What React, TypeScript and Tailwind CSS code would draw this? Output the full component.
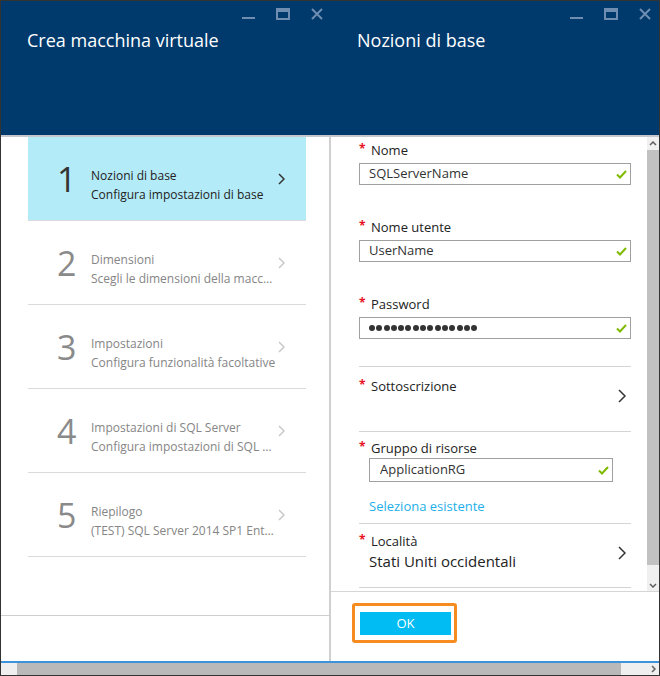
import React from "react";

const steps = [
  { n: "1", title: "Nozioni di base", sub: "Configura impostazioni di base", active: true },
  { n: "2", title: "Dimensioni", sub: "Scegli le dimensioni della macchina virtuale", active: false },
  { n: "3", title: "Impostazioni", sub: "Configura funzionalità facoltative", active: false },
  { n: "4", title: "Impostazioni di SQL Server", sub: "Configura impostazioni di SQL Server", active: false },
  { n: "5", title: "Riepilogo", sub: "(TEST) SQL Server 2014 SP1 Enterprise", active: false },
];

function WindowControls() {
  return (
    <div className="flex items-start gap-[21px] h-[12px]">
      <svg width="13" height="12" viewBox="0 0 13 12">
        <rect x="0" y="9" width="13" height="2" fill="#6f8db0" />
      </svg>
      <svg width="14" height="12" viewBox="0 0 14 12">
        <rect x="1" y="1" width="12" height="10" fill="none" stroke="#6f8db0" strokeWidth="2" />
        <rect x="0" y="0" width="14" height="4" fill="#6f8db0" />
      </svg>
      <svg width="12" height="12" viewBox="0 0 12 12">
        <path d="M1 1 L11 11 M11 1 L1 11" stroke="#6f8db0" strokeWidth="2" />
      </svg>
    </div>
  );
}

function Chevron({ color, w = 7, h = 12 }: { color: string; w?: number; h?: number }) {
  return (
    <svg width={w} height={h} viewBox={`0 0 ${w} ${h}`} className="shrink-0">
      <polyline points={`1,1 ${w - 1},${h / 2} 1,${h - 1}`} fill="none" stroke={color} strokeWidth="1.5" />
    </svg>
  );
}

function Check() {
  return (
    <svg width="11" height="9" viewBox="0 0 11 9" className="shrink-0">
      <polyline points="1,4.5 4,7.5 10,1" fill="none" stroke="#7fba00" strokeWidth="2" />
    </svg>
  );
}

function Label({ text }: { text: string }) {
  return (
    <div className="flex h-4 leading-4 text-[13px] text-[#222]">
      <span className="w-[12px] text-[#e81123] text-[12px] font-bold leading-[14px]">*</span>
      <span>{text}</span>
    </div>
  );
}

function Header({ title }: { title: string }) {
  return (
    <div className="h-[134px] bg-[#003a6c] border-b-2 border-[#c4c8cc] box-content flex flex-col">
      <div className="flex justify-end mt-[7px] pr-[8px]">
        <WindowControls />
      </div>
      <div className="mt-[8px] pl-[26px] text-[18px] leading-6 text-white">{title}</div>
    </div>
  );
}

function LeftBlade() {
  return (
    <div className="w-[330px] flex flex-col">
      <Header title="Crea macchina virtuale" />
      <div className="flex-1 flex flex-col border-r-2 border-[#d0d0d0]">
        <div className="pl-[27px] pr-[23px]">
          {steps.map((s) => (
            <div
              key={s.n}
              className={`h-[84px] flex items-center pl-[29px] border-b border-[#dadada] ${s.active ? "bg-[#b4ebf8]" : ""}`}
            >
              <div className={`w-[34px] text-[34px] leading-none ${s.active ? "text-[#333]" : "text-[#8a8a8a]"}`}>
                {s.n}
              </div>
              <div className={`mt-[12px] w-[187px] text-[12px] leading-[19px] ${s.active ? "text-[#222]" : "text-[#858585]"}`}>
                <div className="truncate">{s.title}</div>
                <div className="truncate">{s.sub}</div>
              </div>
              <Chevron color={s.active ? "#333" : "#c8c8c8"} />
            </div>
          ))}
        </div>
        <div className="flex-1" />
        <div className="h-[46px] border-t border-[#cfcfcf]" />
      </div>
    </div>
  );
}

function Input({ value, className }: { value: React.ReactNode; className: string }) {
  return (
    <div className={`flex items-center justify-between border border-[#a0a0a0] pl-[9px] pr-[3px] text-[13px] text-[#333] ${className}`}>
      <span>{value}</span>
      <Check />
    </div>
  );
}

function Dots() {
  return (
    <span className="flex gap-[1.3px]">
      {Array.from({ length: 15 }).map((_, i) => (
        <span key={i} className="w-[6px] h-[6px] rounded-full bg-[#333]" />
      ))}
    </span>
  );
}

function RightBlade() {
  return (
    <div className="flex-1 flex flex-col">
      <Header title="Nozioni di base" />
      <div className="flex-1 flex flex-col">
        <div className="flex-1 flex">
          <div className="flex-1 pl-[28px] pr-[16px] pt-[5px]">
            <Label text="Nome" />
            <Input value="SQLServerName" className="mt-[5px] h-[22px]" />
            <div className="mt-[34px]">
              <Label text="Nome utente" />
              <Input value="UserName" className="mt-[5px] h-[22px]" />
            </div>
            <div className="mt-[34px]">
              <Label text="Password" />
              <Input value={<Dots />} className="mt-[5px] h-[22px]" />
            </div>
            <div className="mt-[27px] h-px bg-[#d4d4d4]" />
            <div className="h-[64px] flex justify-between pr-[5px]">
              <div className="pt-[11px]">
                <Label text="Sottoscrizione" />
              </div>
              <div className="mt-[22px]">
                <Chevron color="#333" w={8} h={14} />
              </div>
            </div>
            <div className="h-px bg-[#d4d4d4]" />
            <div className="pt-[8px] pb-[9px]">
              <Label text="Gruppo di risorse" />
              <Input value="ApplicationRG" className="mt-[2px] h-[24px] ml-[10px] w-[244px] pl-[10px]" />
              <div className="mt-[16px] ml-[10px] text-[13px] leading-4 text-[#1eb0e8]">Seleziona esistente</div>
            </div>
            <div className="h-px bg-[#d4d4d4]" />
            <div className="flex justify-between pr-[5px] pt-[9px] pb-[16px]">
              <div>
                <Label text="Località" />
                <div className="mt-[2px] ml-[10px] text-[15px] leading-5 text-[#222]">Stati Uniti occidentali</div>
              </div>
              <div className="mt-[13px]">
                <Chevron color="#333" w={8} h={14} />
              </div>
            </div>
            <div className="h-px bg-[#d4d4d4]" />
          </div>
          <div className="w-[12px] bg-[#f0f0f0] flex flex-col">
            <div className="h-[13px] flex items-center justify-center">
              <svg width="8" height="5" viewBox="0 0 8 5">
                <polyline points="1,4 4,1 7,4" fill="none" stroke="#606060" strokeWidth="1.5" />
              </svg>
            </div>
            <div className="flex-1 bg-[#c1c1c1]" />
            <div className="h-[14px]" />
            <div className="h-[12px] flex items-center justify-center">
              <svg width="8" height="5" viewBox="0 0 8 5">
                <polyline points="1,1 4,4 7,1" fill="none" stroke="#606060" strokeWidth="1.5" />
              </svg>
            </div>
          </div>
        </div>
        <div className="h-[70px] border-t border-[#d6d6d6] pl-[21px] pt-[11px]">
          <div className="inline-block border-[3px] border-[#f68b1f] rounded-[3px] pl-[5px] pt-[6px] pr-[3px] pb-[5px]">
            <div className="w-[91px] h-[23px] bg-[#00bcf2] text-white text-[13px] flex items-center justify-center">OK</div>
          </div>
        </div>
      </div>
    </div>
  );
}

export default function App() {
  return (
    <div className="w-[660px] h-[676px] flex flex-col bg-white border border-[#333] font-['Open_Sans','Segoe_UI',sans-serif] overflow-hidden">
      <div className="flex-1 flex min-h-0">
        <LeftBlade />
        <RightBlade />
      </div>
      <div className="h-[2px] bg-[#3d92dc]" />
      <div className="h-[12px] flex bg-[#efefef]">
        <div className="w-[16px]" />
        <div className="w-[604px] bg-[#b9b9b9]" />
        <div className="flex-1 flex items-center justify-end pr-[3px]">
          <svg width="5" height="8" viewBox="0 0 5 8">
            <polyline points="1,1 4,4 1,7" fill="none" stroke="#606060" strokeWidth="1.5" />
          </svg>
        </div>
      </div>
    </div>
  );
}
